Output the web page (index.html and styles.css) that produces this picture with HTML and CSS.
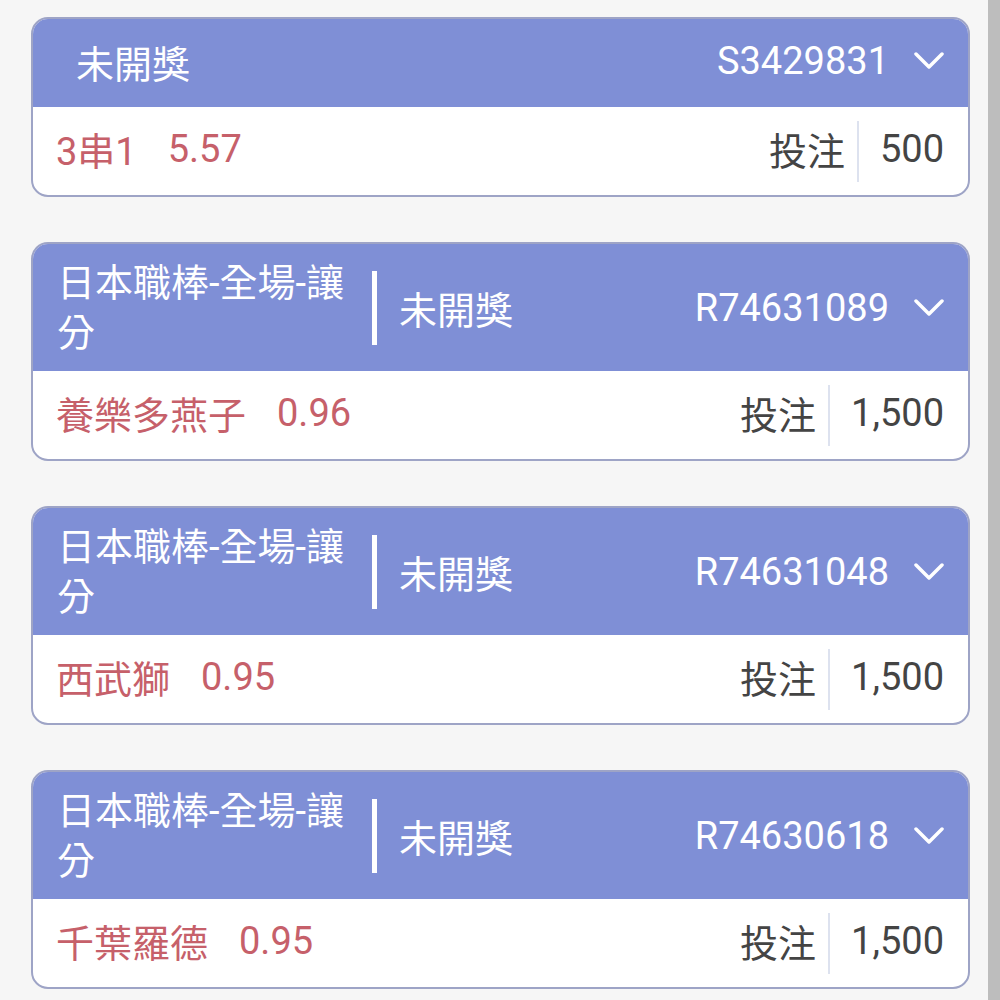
FILE: index.html
```html
<!DOCTYPE html>
<html lang="zh-Hant">
<head>
  <meta charset="UTF-8" />
  <meta name="viewport" content="width=device-width, initial-scale=1.0" />
  <title>投注紀錄</title>
  <link rel="stylesheet" href="styles.css">
</head>
<body>
  <div class="page">
    <div class="list">

      <div class="card">
        <div class="card-head head-single">
          <span class="status">未開獎</span>
          <span class="order">S3429831
            <svg class="chevron" viewBox="0 0 30 18"><polyline points="2,2 15,15 28,2" /></svg>
          </span>
        </div>
        <div class="card-body">
          <span class="pick">3串1</span>
          <span class="odds">5.57</span>
          <span class="bet-label">投注</span>
          <span class="sep"></span>
          <span class="amount">500</span>
        </div>
      </div>

      <div class="card">
        <div class="card-head">
          <span class="title">日本職棒-全場-讓分</span>
          <span class="bar"></span>
          <span class="status">未開獎</span>
          <span class="order">R74631089
            <svg class="chevron" viewBox="0 0 30 18"><polyline points="2,2 15,15 28,2" /></svg>
          </span>
        </div>
        <div class="card-body">
          <span class="pick">養樂多燕子</span>
          <span class="odds">0.96</span>
          <span class="bet-label">投注</span>
          <span class="sep"></span>
          <span class="amount">1,500</span>
        </div>
      </div>

      <div class="card">
        <div class="card-head">
          <span class="title">日本職棒-全場-讓分</span>
          <span class="bar"></span>
          <span class="status">未開獎</span>
          <span class="order">R74631048
            <svg class="chevron" viewBox="0 0 30 18"><polyline points="2,2 15,15 28,2" /></svg>
          </span>
        </div>
        <div class="card-body">
          <span class="pick">西武獅</span>
          <span class="odds">0.95</span>
          <span class="bet-label">投注</span>
          <span class="sep"></span>
          <span class="amount">1,500</span>
        </div>
      </div>

      <div class="card">
        <div class="card-head">
          <span class="title">日本職棒-全場-讓分</span>
          <span class="bar"></span>
          <span class="status">未開獎</span>
          <span class="order">R74630618
            <svg class="chevron" viewBox="0 0 30 18"><polyline points="2,2 15,15 28,2" /></svg>
          </span>
        </div>
        <div class="card-body">
          <span class="pick">千葉羅德</span>
          <span class="odds">0.95</span>
          <span class="bet-label">投注</span>
          <span class="sep"></span>
          <span class="amount">1,500</span>
        </div>
      </div>

    </div>
    <div class="scrollbar"></div>
  </div>
</body>
</html>
```

FILE: styles.css
```css
html, body {
  margin: 0;
  padding: 0;
  height: 100%;
  overflow: hidden;
}

body {
  font-family: "Roboto", "Noto Sans CJK TC", sans-serif;
  background-color: #f6f6f6;
  font-size: 38px;
}

.page {
  display: flex;
  height: 100vh;
}

.list {
  flex: 1;
  padding: 17px 18px 0 31px;
  display: flex;
  flex-direction: column;
  gap: 45px;
}

.scrollbar {
  width: 12px;
  background-color: #bdbdbd;
}

.card {
  border: 2px solid #9ea4c6;
  border-radius: 17px;
  overflow: hidden;
  background: white;
}

.card-head {
  background-color: #7f8fd6;
  color: white;
  display: flex;
  align-items: center;
  height: 127px;
  padding: 0 24px;
  box-sizing: border-box;
}

.head-single {
  height: 88px;
  padding-left: 43px;
  padding-bottom: 4px;
}

.title {
  width: 302px;
  line-height: 50px;
}

.bar {
  width: 5px;
  height: 74px;
  background: white;
  margin-left: 13px;
  margin-right: 22px;
}

.order {
  margin-left: auto;
  display: flex;
  align-items: center;
  gap: 25px;
}

.chevron {
  width: 30px;
  height: 18px;
  fill: none;
  stroke: white;
  stroke-width: 3.5;
  stroke-linecap: round;
  stroke-linejoin: round;
}

.card-body {
  display: flex;
  align-items: center;
  height: 88px;
  box-sizing: border-box;
  padding: 0 24px 5px 23px;
}

.pick, .odds {
  color: #c6606a;
}

.odds {
  margin-left: 31px;
}

.bet-label {
  margin-left: auto;
  color: #444;
}

.sep {
  width: 2px;
  height: 61px;
  background: #dde2ef;
  margin: 6px 21px 0 12px;
}

.amount {
  color: #444;
}
```
